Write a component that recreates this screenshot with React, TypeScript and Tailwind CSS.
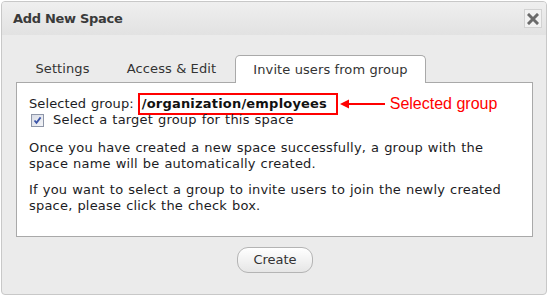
import React from 'react'

const body = { fontFamily: '"DejaVu Sans", Verdana, sans-serif' }

function CloseButton() {
  return (
    <button
      type="button"
      className="flex h-[19px] w-[18px] items-center justify-center border border-[#d2d2d2] bg-[#f2f2f2]"
      aria-label="Close"
    >
      <svg width="12" height="12" viewBox="0 0 12 12" aria-hidden>
        <path d="M2 2 L10 10 M10 2 L2 10" stroke="#6b6b6b" strokeWidth="3" strokeLinecap="square" />
      </svg>
    </button>
  )
}

function Checkbox() {
  return (
    <span className="flex h-[13px] w-[13px] shrink-0 items-center justify-center border border-[#8e96a8] bg-gradient-to-br from-[#d8dce6] to-[#f4f5f8]">
      <svg width="9" height="9" viewBox="0 0 9 9" aria-hidden>
        <path d="M1.5 4.5 L3.5 6.8 L7.6 1.4" fill="none" stroke="#3b54a8" strokeWidth="1.8" />
      </svg>
    </span>
  )
}

export default function App() {
  return (
    <div className="h-[296px] w-[552px] bg-white pl-px pt-px">
      <div
        className="flex h-[294px] w-[546px] flex-col overflow-hidden rounded-[4px] border border-[#c8c8c8] bg-[#ebebeb] text-[13px] text-[#1c1c24]"
        style={body}
      >
        {/* Title bar */}
        <div className="flex h-[33px] shrink-0 items-center justify-between bg-gradient-to-b from-[#efefef] to-[#e2e2e2] pl-[11px] pr-[4px]">
          <span className="text-[13px] font-bold tracking-[-0.3px] text-[#3a3a3a]">Add New Space</span>
          <CloseButton />
        </div>

        {/* Tabs */}
        <div className="ml-[14px] mt-[20px] flex h-[27px] w-[517px] items-stretch pl-px tracking-[0.1px]">
          <div className="flex w-[91px] items-center justify-center text-[#333]">Settings</div>
          <div className="flex w-[127px] items-center justify-center text-[#333]">Access &amp; Edit</div>
          <div className="relative z-10 -mb-px flex w-[191px] items-center justify-center rounded-t-[5px] border border-b-0 border-[#a9a9a9] bg-white text-[#333]">
            Invite users from group
          </div>
        </div>

        {/* Panel */}
        <div className="ml-[14px] h-[155px] w-[517px] border border-[#a9a9a9] bg-white px-[12px] pt-[10px] leading-[16px] tracking-[0.2px] [word-spacing:0.6px]">
          <div className="flex items-center">
            <span className="tracking-[0.1px]">Selected group:</span>
            <span className="ml-[4px] flex h-[22px] w-[200px] items-center border-2 border-[#ff0000] pl-[2px] font-bold tracking-[0.2px] text-[#111]">
              /organization/employees
            </span>
            <svg className="ml-[2px]" width="46" height="12" viewBox="0 0 46 12" aria-hidden>
              <path d="M0 6 L9 1.5 L9 10.5 Z" fill="#ff0000" />
              <path d="M8 6 L45 6" stroke="#ff0000" strokeWidth="2" />
            </svg>
            <span
              className="ml-[4px] text-[16px] tracking-normal text-[#ff0000] [word-spacing:0px]"
              style={{ fontFamily: '"Liberation Sans", Arial, sans-serif' }}
            >
              Selected group
            </span>
          </div>
          <label className="-mt-[3px] flex h-[16px] items-center">
            <span className="ml-[2px]">
              <Checkbox />
            </span>
            <span className="ml-[9px]">Select a target group for this space</span>
          </label>
          <p className="mt-[12px]">
            Once you have created a new space successfully, a group with the
            <br />
            space name will be automatically created.
          </p>
          <p className="mt-[10px]">
            If you want to select a group to invite users to join the newly created
            <br />
            space, please click the check box.
          </p>
        </div>

        {/* Footer */}
        <div className="mt-[10px] flex justify-center pl-[2px]">
          <button
            type="button"
            className="h-[26px] w-[76px] rounded-[11px] border border-[#b4b4b4] bg-gradient-to-b from-white to-[#e6e6e6] text-[13px] text-[#333]"
          >
            Create
          </button>
        </div>
      </div>
    </div>
  )
}
